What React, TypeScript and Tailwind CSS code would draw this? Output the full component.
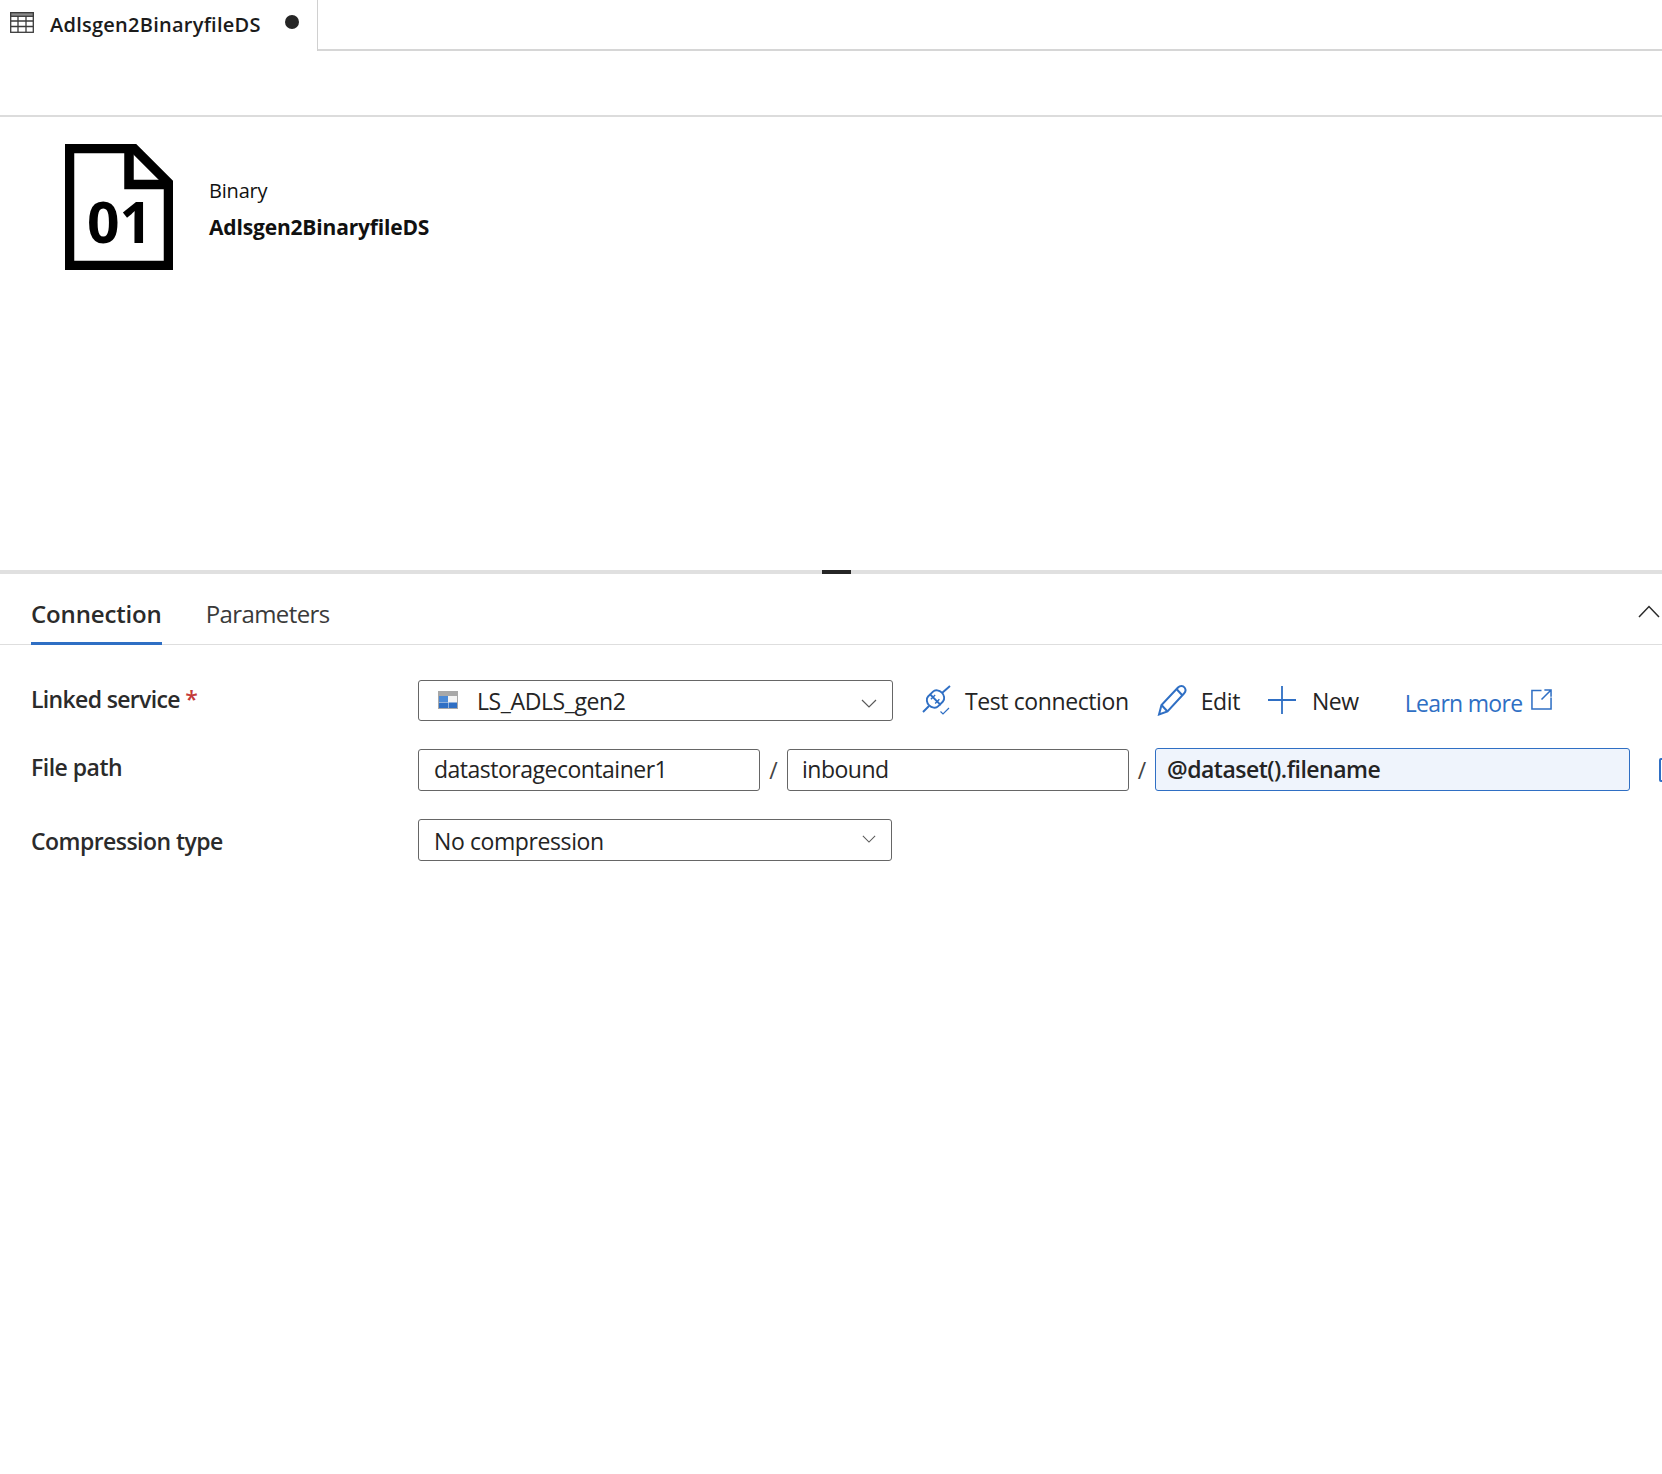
function TableIcon() {
  return (
    <svg width="24" height="21" viewBox="0 0 24 21" fill="none" stroke="#3b3b3b" strokeWidth="1.3" className="shrink-0">
      <rect x="0.7" y="0.7" width="22.6" height="19.6" />
      <rect x="0.7" y="0.7" width="22.6" height="3.6" fill="#8a8a8a" stroke="#3b3b3b" />
      <path d="M1 9h22M1 14.5h22M8 4v16M16 4v16" />
    </svg>
  );
}
function DocIcon() {
  return (
    <svg width="108" height="126" viewBox="0 0 108 126" className="shrink-0">
      <path d="M4.5 4.5H69L103.500 39V121.500H4.500Z" fill="#fff" stroke="#000" strokeWidth="9.500" />
      <path d="M64 4V40.500H104" fill="none" stroke="#000" strokeWidth="9.500" />
      <text x="22" y="99" fontFamily="'Open Sans', sans-serif" fontWeight="700" fontSize="57" fill="#000">01</text>
    </svg>
  );
}
function Chevron({ w = 16, h = 9 }: { w?: number; h?: number }) {
  return (
    <svg width={w} height={h} viewBox="0 0 16 9" fill="none" stroke="#5a5a5a" strokeWidth="1.200">
      <path d="M1 1l7 7 7-7" />
    </svg>
  );
}
function PlugIcon() {
  return (
    <svg width="30" height="30" viewBox="0 0 30 30" fill="none" stroke="#2f6fc4" strokeWidth="1.900" className="shrink-0">
      <path d="M1 27L7 21" />
      <path d="M20 8L28 1" />
      <g transform="rotate(-45 13.500 14)">
        <path d="M13 7H17C20 7 22.500 10.500 22.500 14C22.500 17.500 20 21 17 21H13Z" />
        <path d="M13 7H10C7 7 4.500 10.500 4.500 14C4.500 17.500 7 21 10 21H13" />
        <path d="M10 11L16 11M10 17L16 17" strokeWidth="1.400" />
      </g>
      <path d="M18.500 26.500l2.500 2.500 6-6" strokeWidth="1.200" />
    </svg>
  );
}
function PencilIcon() {
  return (
    <svg width="30" height="32" viewBox="0 0 30 32" fill="none" stroke="#2f6fc4" strokeWidth="2" className="shrink-0">
      <path d="M2 30.500 L4.500 21 L21 3.500 C23 1.500 26 1.500 27.500 3.500 C29 5.500 28.500 8 27 9.500 L10.500 27.500 Z" />
      <path d="M4.500 21 L10.500 27.500" />
      <path d="M19.500 5 L25.500 11.500" />
    </svg>
  );
}
function PlusIcon() {
  return (
    <svg width="28" height="28" viewBox="0 0 28 28" fill="none" stroke="#2f6fc4" strokeWidth="1.800" className="shrink-0">
      <path d="M14 0v28M0 14h28" />
    </svg>
  );
}
function ExternalIcon() {
  return (
    <svg width="21" height="21" viewBox="0 0 22 22" fill="none" stroke="#2f6fc4" strokeWidth="1.600" className="shrink-0">
      <path d="M11 1.500H1V21H21V9" />
      <path d="M11 11L21 1M14 1H21V8" />
    </svg>
  );
}
function LinkedIcon() {
  return (
    <svg width="20" height="18" viewBox="0 0 20 18" className="shrink-0">
      <rect width="20" height="18" fill="#a8a8a8" />
      <rect x="1" y="5" width="18" height="12" fill="#f4f4f4" />
      <rect x="1" y="5" width="9" height="6" fill="#4c8ad6" />
      <rect x="1" y="11.500" width="9" height="5.500" fill="#2f6fc4" />
      <rect x="10.500" y="11.500" width="8.500" height="5.500" fill="#2f6fc4" />
    </svg>
  );
}

export default function App() {
  return (
    <div className="w-[1662px] h-[1474px] overflow-hidden bg-white text-[#242424] font-['Open_Sans',sans-serif]">
      <div className="flex h-[51px]">
        <div className="w-[318px] shrink-0 flex items-start border-r border-[#d0d0d0] pl-[10px] pt-[12px]">
          <TableIcon />
          <span className="ml-[16px] text-[20px] leading-[26px] font-semibold text-[#1b1b1b] tracking-[0.25px]">Adlsgen2BinaryfileDS</span>
          <span className="ml-[24px] mt-[3px] w-[14px] h-[14px] rounded-full bg-[#252525]" />
        </div>
        <div className="flex-1 border-b-2 border-[#d6d6d6]" />
      </div>
      <div className="h-[66px] border-b-2 border-[#dcdcdc]" />
      <div className="h-[453px] pl-[65px] pt-[27px] flex items-start">
        <DocIcon />
        <div className="ml-[36px] mt-[34px]">
          <div className="text-[20px] leading-[26px] text-[#111] tracking-[-0.2px]">Binary</div>
          <div className="text-[21px] leading-[26px] mt-[10px] font-bold text-[#111] tracking-[-0.17px]">Adlsgen2BinaryfileDS</div>
        </div>
      </div>
      <div className="relative h-[4px] bg-[#e0e0e0]">
        <div className="absolute left-[822px] top-0 h-[4px] w-[29px] bg-[#252525]" />
      </div>
      <div className="h-[71px] border-b border-[#dedede] flex items-start pl-[31px] relative">
        <div className="h-[71px] border-b-[3px] border-[#2f6fc4] pt-[24px] text-[24px] leading-[32px] font-semibold text-[#2b2b2b] tracking-[-0.15px]">Connection</div>
        <div className="ml-[44px] pt-[24px] text-[24px] leading-[32px] text-[#3a3a3a] tracking-[-0.6px]">Parameters</div>
        <svg width="22" height="13" viewBox="0 0 22 13" fill="none" stroke="#2a2a2a" strokeWidth="1.500" className="absolute left-[1638px] top-[31px]">
          <path d="M1 12L11 1.500 21 12" />
        </svg>
      </div>
      <div className="pl-[31px] pt-[34px]">
        <div className="flex items-center h-[42px]">
          <div className="w-[387px] shrink-0 -mt-[1px] text-[23px] font-semibold tracking-[-0.65px] text-[#2b2b2b]">
            Linked service <span className="text-[#c43a3a]">*</span>
          </div>
          <div className="w-[475px] shrink-0 h-[41px] border border-[#666] rounded-[3px] flex items-center pl-[19px] pr-[15px]">
            <LinkedIcon />
            <span className="ml-[19px] pt-[2px] text-[23px] text-[#242424] tracking-[-0.4px]">LS_ADLS_gen2</span>
            <span className="ml-auto mt-[6px]"><Chevron /></span>
          </div>
          <div className="ml-[29px] flex items-center">
            <PlugIcon />
            <span className="ml-[13px] pt-[2px] text-[23px] tracking-[-0.4px]">Test connection</span>
            <span className="ml-[28px]"><PencilIcon /></span>
            <span className="ml-[14px] pt-[2px] text-[23px] tracking-[-0.4px]">Edit</span>
            <span className="ml-[28px]"><PlusIcon /></span>
            <span className="ml-[16px] pt-[2px] text-[23px] tracking-[-0.4px]">New</span>
            <span className="ml-[46px] pt-[6px] text-[23px] text-[#2f6fc4] tracking-[-0.7px]">Learn more</span>
            <span className="ml-[9px] -mt-[1px]"><ExternalIcon /></span>
          </div>
        </div>
        <div className="flex items-center h-[42px] mt-[28px]">
          <div className="w-[387px] shrink-0 -mt-[6px] text-[23px] font-semibold tracking-[-0.5px] text-[#2b2b2b]">File path</div>
          <div className="w-[342px] shrink-0 h-[42px] border border-[#666] rounded-[3px] flex items-center pl-[15px] pb-[2px] text-[23px] tracking-[-0.5px]">datastoragecontainer1</div>
          <span className="w-[27px] shrink-0 text-center text-[23px] text-[#444]">/</span>
          <div className="w-[342px] shrink-0 h-[42px] border border-[#666] rounded-[3px] flex items-center pl-[14px] pb-[2px] text-[23px] tracking-[-0.5px]">inbound</div>
          <span className="w-[26px] shrink-0 text-center text-[23px] text-[#444]">/</span>
          <div className="w-[475px] shrink-0 h-[43px] -mt-[1px] border border-[#2f6fc4] rounded-[3px] bg-[#eff4fc] flex items-center pl-[11px] text-[23px] font-semibold tracking-[-0.5px]">@dataset().filename</div>
          <svg width="20" height="24" viewBox="0 0 20 24" fill="none" stroke="#2f6fc4" strokeWidth="2" className="ml-[29px] shrink-0">
            <rect x="1" y="1" width="18" height="22" rx="1" />
          </svg>
        </div>
        <div className="flex items-center h-[42px] mt-[28px]">
          <div className="w-[387px] shrink-0 mt-[2px] text-[23px] font-semibold tracking-[-0.55px] text-[#2b2b2b]">Compression type</div>
          <div className="w-[474px] shrink-0 h-[42px] border border-[#666] rounded-[3px] flex items-center pl-[15px] pr-[15px] text-[23px] tracking-[-0.4px]">
            <span className="pt-[2px]">No compression</span>
            <span className="ml-auto -mt-[3px]"><Chevron w={14} h={8} /></span>
          </div>
        </div>
      </div>
    </div>
  );
}
